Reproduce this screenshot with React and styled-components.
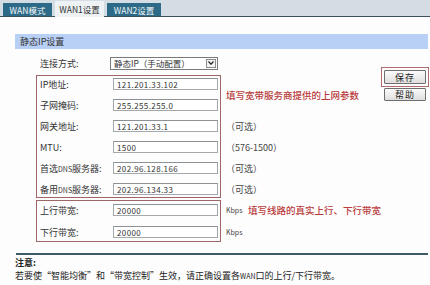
import React from "react";
import styled, { createGlobalStyle } from "styled-components";

const Global = createGlobalStyle`
  html, body { margin: 0; padding: 0; background: #ffffff; }
  body {
    font-family: "Noto Sans CJK SC", "Noto Sans", sans-serif;
    font-size: 9px;
    color: #333;
  }
`;

const Page = styled.div`
  width: 430px;
  height: 285px;
  overflow: hidden;
  background: #fdfdfd;
`;

const TabBar = styled.div`
  height: 16px;
  display: flex;
  align-items: flex-end;
  gap: 3px;
  padding-left: 3px;
  background: #d4dce4;
  border-bottom: 1px solid #3c515e;
`;

const Tab = styled.div`
  width: ${(p) => p.$w}px;
  height: ${(p) => (p.$active ? 16 : 13)}px;
  display: flex;
  align-items: center;
  justify-content: center;
  font-size: 8.5px;
  background: ${(p) => (p.$active ? "#eef2f4" : "#2d6a87")};
  color: ${(p) => (p.$active ? "#333" : "#f4f8fa")};
  margin-bottom: ${(p) => (p.$active ? "-1px" : "0")};
`;

const Content = styled.div`
  padding: 17px 2px 0 15px;
`;

const SectionHeader = styled.div`
  height: 15px;
  display: flex;
  align-items: center;
  padding-left: 5px;
  background: #b8cff6;
  color: #333;
  font-size: 9px;
`;

const Main = styled.div`
  display: flex;
  align-items: flex-start;
`;

const FormCol = styled.div`
  display: flex;
  flex-direction: column;
  padding-left: 21px;
`;

const TopRow = styled.div`
  height: 26px;
  padding-top: 2px;
  box-sizing: border-box;
  display: flex;
  align-items: center;
  padding-left: 4px;
`;

const TopLabel = styled.span`
  width: 70px;
`;

const Select = styled.div`
  width: 108px;
  height: 13px;
  box-sizing: border-box;
  border: 1px solid #7a7a7a;
  display: flex;
  align-items: center;
  justify-content: space-between;
  padding-left: 3px;
  background: #fff;
  font-size: 8.5px;
`;

const Arrow = styled.span`
  width: 10px;
  height: 9px;
  margin-right: 1px;
  border: 1px solid #8a8a8a;
  box-sizing: border-box;
  display: flex;
  align-items: center;
  justify-content: center;
  background: #f2f2f2;
`;

const Group = styled.div`
  display: flex;
  align-items: flex-start;
  margin-top: ${(p) => p.$mt || 0}px;
`;

const Box = styled.div`
  width: 185px;
  box-sizing: border-box;
  border: 1px solid #9e6666;
  padding: ${(p) => p.$pad}px 2px ${(p) => p.$pad}px 3px;
  display: grid;
  grid-template-columns: 73px 105px;
  grid-auto-rows: 16px;
  row-gap: ${(p) => p.$gap}px;
  align-items: center;
`;

const Label = styled.span`
  font-size: 9px;
  color: #333;
  white-space: nowrap;
`;

const Small = styled.span`
  font-size: 7px;
`;

const Input = styled.div`
  height: 12px;
  box-sizing: border-box;
  border: 1px solid #a3a8ad;
  border-top-color: #8d9297;
  background: #fff;
  padding-left: 3px;
  display: flex;
  align-items: center;
  font-size: 8px;
  letter-spacing: 0.4px;
  color: #333;
`;

const Notes = styled.div`
  margin-left: 5px;
  display: grid;
  grid-auto-rows: 16px;
  row-gap: ${(p) => p.$gap}px;
  padding-top: ${(p) => p.$pt}px;
  align-items: center;
`;

const Hint = styled.span`
  grid-row: ${(p) => p.$row || "auto"};
  font-size: 9px;
  color: #444;
  white-space: nowrap;
`;

const RedNote = styled.span`
  grid-row: ${(p) => p.$row || "auto"};
  align-self: center;
  color: #b83a3a;
  font-size: 9.5px;
  font-weight: 500;
  white-space: nowrap;
`;

const Unit = styled.span`
  font-size: 7px;
  color: #444;
  width: 22px;
`;

const UnitRow = styled.div`
  display: flex;
  align-items: center;
`;

const ButtonCol = styled.div`
  margin-left: auto;
  margin-right: 5px;
  padding-top: 18px;
  display: flex;
  flex-direction: column;
  align-items: center;
`;

const Frame = styled.div`
  border: 1px solid #b06c6c;
  padding: 2px;
`;

const Button = styled.div`
  width: 42px;
  height: ${(p) => p.$h || 14}px;
  box-sizing: border-box;
  border: 1px solid #6f6f6f;
  border-radius: 1px;
  background: linear-gradient(#fbfbfb, #dedede);
  display: flex;
  align-items: center;
  justify-content: center;
  font-size: 9px;
  letter-spacing: 1px;
  color: #222;
  margin-top: ${(p) => p.$mt || 0}px;
`;

const Divider = styled.div`
  margin: 11px 0 0 1px;
  height: 2px;
  background: #3d5a68;
`;

const NoteTitle = styled.div`
  margin-top: 1px;
  line-height: 13px;
  font-weight: 700;
  font-size: 9px;
  color: #222;
`;

const NoteText = styled.div`
  line-height: 13px;
  font-size: 9px;
  color: #222;
  white-space: nowrap;
`;

const rows1 = [
  ["IP地址:", "121.201.33.102"],
  ["子网掩码:", "255.255.255.0"],
  ["网关地址:", "121.201.33.1"],
  ["MTU:", "1500"],
  [<>首选<Small>DNS</Small>服务器:</>, "202.96.128.166"],
  [<>备用<Small>DNS</Small>服务器:</>, "202.96.134.33"],
];

const rows2 = [
  ["上行带宽:", "20000"],
  ["下行带宽:", "20000"],
];

export default function App() {
  return (
    <Page>
      <Global />
      <TabBar>
        <Tab $w={49}>WAN模式</Tab>
        <Tab $w={49} $active>WAN1设置</Tab>
        <Tab $w={54}>WAN2设置</Tab>
      </TabBar>
      <Content>
        <SectionHeader>静态IP设置</SectionHeader>
        <Main>
          <FormCol>
            <TopRow>
              <TopLabel>连接方式:</TopLabel>
              <Select>
                静态IP（手动配置）
                <Arrow>
                  <svg width="6" height="4" viewBox="0 0 6 4">
                    <path d="M0.5 0.5 L3 3.2 L5.5 0.5" fill="none" stroke="#222" strokeWidth="1.2" />
                  </svg>
                </Arrow>
              </Select>
            </TopRow>
            <Group>
              <Box $pad={0} $gap={5}>
                {rows1.map(([l, v], i) => (
                  <React.Fragment key={i}>
                    <Label>{l}</Label>
                    <Input>{v}</Input>
                  </React.Fragment>
                ))}
              </Box>
              <Notes $gap={5} $pt={1}>
                <RedNote $row="1 / 3">填写宽带服务商提供的上网参数</RedNote>
                <Hint $row="3">（可选）</Hint>
                <Hint $row="4">（576-1500）</Hint>
                <Hint $row="5">（可选）</Hint>
                <Hint $row="6">（可选）</Hint>
              </Notes>
            </Group>
            <Group $mt={2}>
              <Box $pad={1} $gap={6}>
                {rows2.map(([l, v], i) => (
                  <React.Fragment key={i}>
                    <Label>{l}</Label>
                    <Input>{v}</Input>
                  </React.Fragment>
                ))}
              </Box>
              <Notes $gap={6} $pt={2}>
                <UnitRow>
                  <Unit>Kbps</Unit>
                  <RedNote>填写线路的真实上行、下行带宽</RedNote>
                </UnitRow>
                <UnitRow>
                  <Unit>Kbps</Unit>
                </UnitRow>
              </Notes>
            </Group>
          </FormCol>
          <ButtonCol>
            <Frame>
              <Button>保存</Button>
            </Frame>
            <Button $mt={1} $h={13}>帮助</Button>
          </ButtonCol>
        </Main>
        <Divider />
        <NoteTitle>注意:</NoteTitle>
        <NoteText>若要使“智能均衡”和“带宽控制”生效，请正确设置各<Small>WAN</Small>口的上行/下行带宽。</NoteText>
      </Content>
    </Page>
  );
}
